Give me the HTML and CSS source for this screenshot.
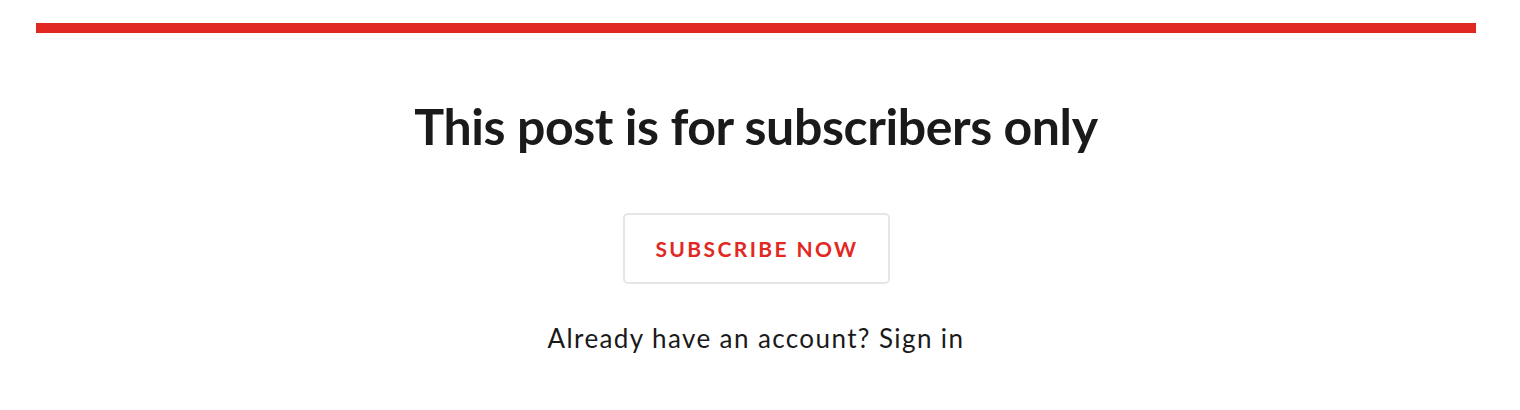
FILE: index.html
```html
<!DOCTYPE html>
<html lang="en">
<head>
<meta charset="utf-8">
<title>This post is for subscribers only</title>
<link rel="stylesheet" href="styles.css">
</head>
<body>
<section class="cta">
  <h2 class="cta-title">This post is for subscribers only</h2>
  <a class="cta-button" href="#">Subscribe now</a>
  <p class="cta-signin">Already have an account? <a href="#">Sign in</a></p>
</section>
</body>
</html>
```

FILE: styles.css
```css
html, body {
  margin: 0;
  padding: 0;
  background: #ffffff;
}
body {
  font-family: Lato, "Noto Sans", sans-serif;
  color: #1a1a1a;
}
.cta {
  width: 1440px;
  margin: 23px 0 0 36px;
  border-top: 10px solid #e22822;
  display: flex;
  flex-direction: column;
  align-items: center;
}
.cta-title {
  margin: 63px 0 0;
  font-size: 50px;
  line-height: 60px;
  letter-spacing: -0.4px;
  font-weight: 700;
  color: #1a1a1a;
}
.cta-button {
  margin-top: 57px;
  box-sizing: border-box;
  width: 267px;
  height: 71px;
  border: 2px solid #e6e6e6;
  border-radius: 5px;
  display: flex;
  align-items: center;
  justify-content: center;
  padding-left: 2px;
  color: #e22822;
  font-size: 21px;
  font-weight: 700;
  letter-spacing: 2.4px;
  text-transform: uppercase;
  text-decoration: none;
}
.cta-signin {
  margin: 37px 0 0;
  font-size: 26px;
  line-height: 34px;
  letter-spacing: 1.4px;
  color: #1a1a1a;
}
.cta-signin a {
  color: inherit;
  text-decoration: none;
}
```
